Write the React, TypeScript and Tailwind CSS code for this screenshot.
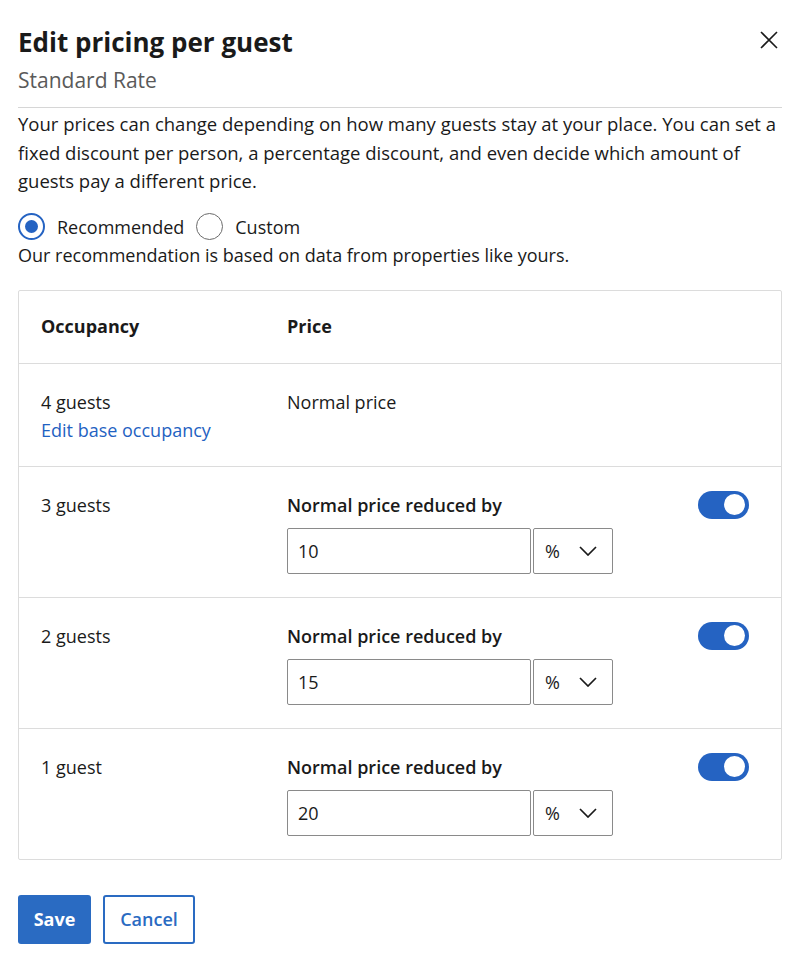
import { useState } from "react";

type Row = { guests: string; value: string; on: boolean };

const initialRows: Row[] = [
  { guests: "3 guests", value: "10", on: true },
  { guests: "2 guests", value: "15", on: true },
  { guests: "1 guest", value: "20", on: true },
];

function Toggle({ on, onClick }: { on: boolean; onClick: () => void }) {
  return (
    <button
      onClick={onClick}
      className={`flex h-[28px] w-[51px] items-center rounded-full px-[4px] ${
        on ? "justify-end bg-[#2563c2]" : "justify-start border-2 border-[#6b6b6b] bg-white"
      }`}
    >
      <span className={`block h-[21px] w-[21px] rounded-full ${on ? "bg-white" : "bg-[#6b6b6b]"}`} />
    </button>
  );
}

function Radio({ checked, label, onClick }: { checked: boolean; label: string; onClick: () => void }) {
  return (
    <button onClick={onClick} className="flex items-center gap-[12px]">
      {checked ? (
        <span className="flex h-[27px] w-[27px] items-center justify-center rounded-full border-[2.5px] border-[#2563c2]">
          <span className="block h-[13px] w-[13px] rounded-full bg-[#2563c2]" />
        </span>
      ) : (
        <span className="block h-[27px] w-[27px] rounded-full border-[1.5px] border-[#6b6b6b]" />
      )}
      <span>{label}</span>
    </button>
  );
}

export default function App() {
  const [mode, setMode] = useState("recommended");
  const [rows, setRows] = useState(initialRows);

  return (
    <div className="h-[959px] w-[800px] bg-white px-[18px] pt-[25px] font-['Open_Sans',sans-serif] text-[18px] text-[#1a1a1a]">
      <div className="flex items-start justify-between">
        <div>
          <h1 className="text-[26px] font-bold leading-[34px]">Edit pricing per guest</h1>
          <p className="mt-[7px] text-[21px] leading-[28px] text-[#5a5a5a]">Standard Rate</p>
        </div>
        <button className="mr-[4px] mt-[6px] text-[#1a1a1a]">
          <svg width="18" height="18" viewBox="0 0 18 18" fill="none" stroke="currentColor" strokeWidth="1.6">
            <path d="M1 1l16 16M17 1L1 17" />
          </svg>
        </button>
      </div>

      <div className="mt-[13px] border-t border-[#d6d6d6]" />

      <p className="mt-[2px] text-[18.5px] leading-[28.5px]">
        Your prices can change depending on how many guests stay at your place. You can set a fixed
        discount per person, a percentage discount, and even decide which amount of guests pay a
        different price.
      </p>

      <div className="mt-[17px] flex items-center gap-[12px] leading-[28px]">
        <Radio checked={mode === "recommended"} label="Recommended" onClick={() => setMode("recommended")} />
        <Radio checked={mode === "custom"} label="Custom" onClick={() => setMode("custom")} />
      </div>
      <p className="leading-[28px]">Our recommendation is based on data from properties like yours.</p>

      <div className="mt-[21px] rounded-[2px] border border-[#dcdcdc]">
        <div className="grid h-[73px] grid-cols-[246px_1fr] items-center border-b border-[#dcdcdc] px-[22px] font-bold">
          <span>Occupancy</span>
          <span>Price</span>
        </div>

        <div className="grid grid-cols-[246px_1fr] border-b border-[#dcdcdc] px-[22px] pb-[22px] pt-[24px] leading-[28px]">
          <div>
            <div>4 guests</div>
            <a href="#" className="block text-[#1f62c2]">
              Edit base occupancy
            </a>
          </div>
          <div>Normal price</div>
        </div>

        {rows.map((r, i) => (
          <div
            key={r.guests}
            className={`grid grid-cols-[246px_1fr_auto] px-[22px] pb-[23px] pt-[24px] leading-[28px] ${
              i < rows.length - 1 ? "border-b border-[#dcdcdc]" : ""
            }`}
          >
            <div>{r.guests}</div>
            <div>
              <div className="font-semibold">Normal price reduced by</div>
              <div className="mt-[9px] flex gap-[2px]">
                <input
                  value={r.value}
                  onChange={(e) =>
                    setRows(rows.map((x, j) => (j === i ? { ...x, value: e.target.value } : x)))
                  }
                  className="h-[46px] w-[244px] rounded-[2px] border border-[#8a8a8a] px-[10px] outline-none"
                />
                <div className="flex h-[46px] w-[80px] items-center justify-between rounded-[2px] border border-[#8a8a8a] pl-[11px] pr-[15px]">
                  <span>%</span>
                  <svg width="18" height="10" viewBox="0 0 18 10" fill="none" stroke="currentColor" strokeWidth="1.7">
                    <path d="M1 1l8 8 8-8" />
                  </svg>
                </div>
              </div>
            </div>
            <div className="mr-[10px]">
              <Toggle
                on={r.on}
                onClick={() => setRows(rows.map((x, j) => (j === i ? { ...x, on: !x.on } : x)))}
              />
            </div>
          </div>
        ))}
      </div>

      <div className="mt-[35px] flex gap-[12px]">
        <button className="h-[49px] w-[73px] rounded-[3px] bg-[#2a6bc2] font-bold text-white">Save</button>
        <button className="h-[49px] w-[92px] rounded-[3px] border-2 border-[#2a6bc2] font-semibold text-[#2a6bc2]">
          Cancel
        </button>
      </div>
    </div>
  );
}
